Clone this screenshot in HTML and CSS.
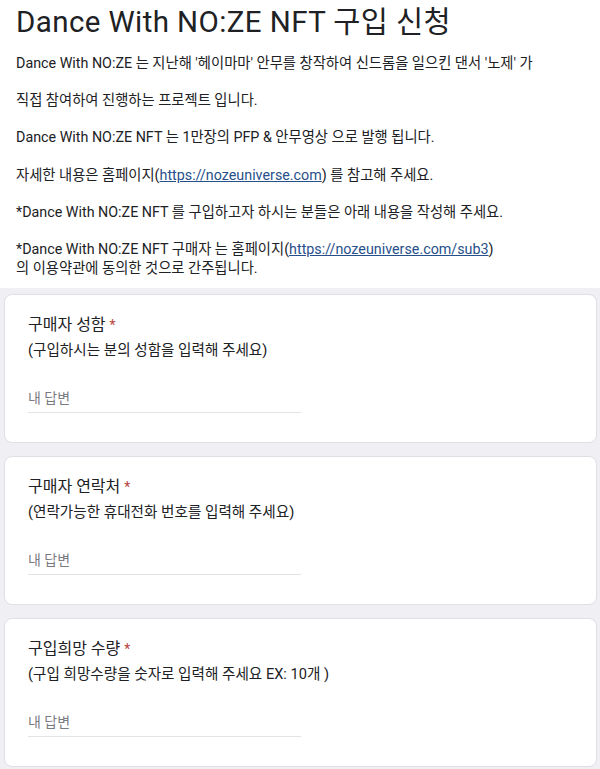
FILE: index.html
```html
<!DOCTYPE html>
<html lang="ko">
<head>
	<meta charset="UTF-8">
	<title>Dance With NO:ZE NFT 구입 신청</title>
	<link rel="stylesheet" href="styles.css">
</head>
<body>
	<div class="head">
		<h1 class="title">Dance With NO:ZE NFT 구입 신청</h1>
		<div class="desc">
			<p>Dance With NO:ZE 는 지난해 '헤이마마' 안무를 창작하여 신드롬을 일으킨 댄서 '노제' 가</p>
			<p>직접 참여하여 진행하는 프로젝트 입니다.</p>
			<p>Dance With NO:ZE NFT 는 1만장의 PFP &amp; 안무영상 으로 발행 됩니다.</p>
			<p>자세한 내용은 홈페이지(<a href="javascript:;">https://nozeuniverse.com</a>) 를 참고해 주세요.</p>
			<p>*Dance With NO:ZE NFT 를 구입하고자 하시는 분들은 아래 내용을 작성해 주세요.</p>
			<p>*Dance With NO:ZE NFT 구매자 는 홈페이지(<a href="javascript:;">https://nozeuniverse.com/sub3</a>)<br>의 이용약관에 동의한 것으로 간주됩니다.</p>
		</div>
	</div>
	<div class="list">
		<div class="card">
			<div class="q">구매자 성함 <span class="req">*</span></div>
			<div class="sub">(구입하시는 분의 성함을 입력해 주세요)</div>
			<div class="answer">내 답변</div>
		</div>
		<div class="card">
			<div class="q">구매자 연락처 <span class="req">*</span></div>
			<div class="sub">(연락가능한 휴대전화 번호를 입력해 주세요)</div>
			<div class="answer">내 답변</div>
		</div>
		<div class="card">
			<div class="q">구입희망 수량 <span class="req">*</span></div>
			<div class="sub">(구입 희망수량을 숫자로 입력해 주세요 EX: 10개 )</div>
			<div class="answer">내 답변</div>
		</div>
	</div>
</body>
</html>
```

FILE: styles.css
```css
body{
	margin: 0;
	background: #efeff4;
	font-family: Roboto, "Noto Sans CJK KR", sans-serif;
	color: #202124;
}
.head{
	background: #fff;
	padding: 2px 16px 11px;
}
.title{
	margin: 0;
	font-size: 29.5px;
	font-weight: 400;
	line-height: 40px;
	letter-spacing: 0.4px;
}
.desc{
	margin-top: 12px;
	font-size: 14.3px;
	line-height: 18.6px;
}
.desc p{
	margin: 0 0 18.6px;
}
.desc p:last-child{
	margin-bottom: 0;
}
.desc a{
	color: #27508a;
}
.list{
	padding: 6px 3px 4px 4px;
	display: flex;
	flex-direction: column;
	gap: 13px;
}
.card{
	box-sizing: border-box;
	height: 149px;
	padding: 19px 23px 0;
	background: #fff;
	border: 1px solid #dfdfe6;
	border-radius: 8px;
}
.q{
	font-size: 16px;
	line-height: 22px;
}
.req{
	color: #b8433a;
	font-size: 14px;
}
.sub{
	margin-top: 4px;
	font-size: 14.6px;
	line-height: 20px;
}
.answer{
	margin-top: 28px;
	width: 273px;
	font-size: 14px;
	line-height: 20px;
	color: #7a7b7f;
	padding-bottom: 4px;
	border-bottom: 1px solid #e3e3e6;
}
```
